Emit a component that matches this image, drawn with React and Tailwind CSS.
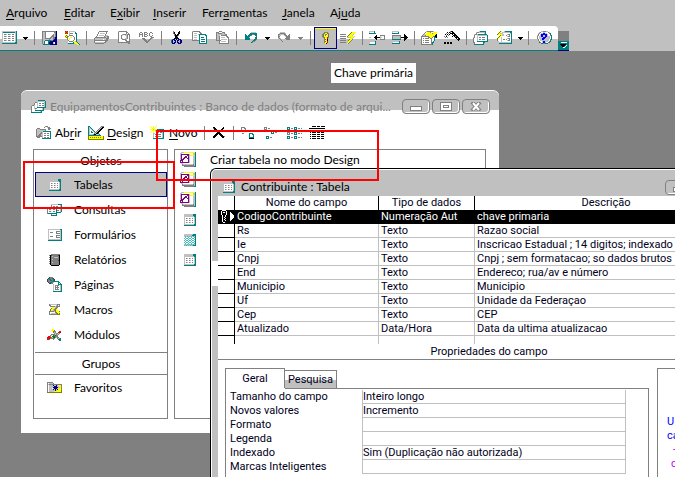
import React from "react";

const COLORS = {
  k: "#000000", g: "#808080", s: "#c0c0c0", w: "#ffffff", t: "#008080", n: "#000080",
  b: "#0000ff", y: "#ffff00", o: "#808000", r: "#ff0000", m: "#800080", e: "#008000", d: "#404040", c: "#40c0c0",
};

const ICONS = {
  table: [
    "sssssssssssssst", "sttttttttttttst", "swwwwwwwwwwwwst", "swggswggswggwst", "swwwwwwwwwwwwst",
    "swggswggswggwst", "swwwwwwwwwwwwst", "swggswggswggwst", "swwwwwwwwwwwwst", "swggswggswggwst",
    "swwwwwwwwwwwwst", "ssssssssssssstt", "ttttttttttttttt",
  ],
  grid: [
    "sssssssssttt", "sssssssssttt", "sssssssssstt", "swwwwwwwwwst", "swgswgswgwst", "swwwwwwwwwst",
    "swgswgswgwst", "swwwwwwwwwst", "swgswgswgwst", "swwwwwwwwwst", "sssssssssstt", "tttttttttttt",
  ],
  gridTeal: [
    "sssssssssttt", "sssssssstttt", "scscscscscst", "wcwwcwwcwwct", "cwccwccwccwt", "wcwwcwwcwwct",
    "cwccwccwccwt", "wcwwcwwcwwct", "cwccwccwccwt", "wcwwcwwcwwct", "scscscscscst", "cscscscscttt",
  ],
  save: [
    "ggggggggggggggn", "gssgwwwwwwwwggn", "gssgwwwwwwwwsgn", "gssgwwwwwwwgsgn", "gssgwwwwwwggsgn", "gssgwwwwwgggsgn", "gssgwwwwggsggnn",
    "gssggggggssggnn", "gssssssgsssgnnn", "gssttttttggnnnn", "gstwwwttnnnnnnn", "gstwwwtnnnnswnn", "gstwwwtnnnnswnn", ".tttttttnnnnnnn",
  ],
  search: [
    "ror.ssssss.....", "oro.swwwwwt....", "ror.sgggwwtt...", "....swwwwwwt...", "yoy.ggggwwwt...", "oyogwwwwgwwt...",
    "yogwwyywwgwt...", "..gwywwwwgwt...", "..gwywwwwgwt...", "..sgwwwwgwwt...", "..swggggyyst...", "..swwwwwtyyyt..",
    "...ttttttsyyyt.", "............yyt",
  ],
  print: [
    ".....ggggggggg.", "....gwwwwwwwg..", "....gwssssswg..", "...gwwwwwwwg...", "...gwssssswgss.", "..gwwwwwwwgssgg",
    ".gggggggggggsgg", "gsssssssssssggg", "gsssssssswssgg.", "gggggggggggggg.", "gwwwwwwwwwwgg..", "gsssssssssgg...", ".ggggggggg.....",
  ],
  preview: [
    "sgggggggg...", "gwwwwwwwgg..", "gwwwwwwwgwg.", "gwwwsgggsggg", "gwwgswwssgwg", "gwwgwwwwsgwg",
    "gwwgwwwwsgwg", "gwwgswwssgwg", "gwwwggggswwg", "gwwwwwwggwwg", "gwwwwwwwgggg", "gggggggggggg", "..........gg",
  ],
  spell: [
    ".gg..ggg...gg...", "g..g.g..g.g..g..", "gggg.ggg..g.....", "g..g.g..g.g..g..", "g..g.ggg...gg...", "............ggg.",
    "...ggg.....ggs..", "....ggg...ggs...", ".....ggg.ggs....", "......ggggs.....", ".......ggs......", "........s.......",
  ],
  cut: [
    "..g.....k..", "..gk...kk..", "..gk...kk..", "...gk.kk...", "...gkkkg...", "....kkg....", "....kkk....",
    "...nknkn...", ".tnn.k.nnn.", "tn.nn.nn.nn", "tn..n.n..nn", "tn.nn.nn.nn", ".nnn...nnn.",
  ],
  copy: [
    "sggggggg.......", "gwwwwwwgg......", "gwssswwwgg.....", "gwwwwwsttttttt.", "gwssswwtwwwwwtt", "gwwwwwwtwwwwwwt",
    "gwssswwtwtttwwt", "gwwwwwwtwwwwwwt", "gwssswwtwttttwt", "gggggggtwwwwwwt", ".......twttttwt", ".......twwwwwwt", ".......tttttttt",
  ],
  paste: [
    "....ggg........", ".gggwwwggg.....", ".gsggggssg.....", ".gssssssssgg...", ".gssswgggggg...", ".gssgwwwwwwgg..",
    ".gssgwsssswwgg.", ".gssgwwwwwwwwg.", ".gssgwsssssswg.", ".gggggwwwwwwwg.", "....gwssssswwg.", "....gwwwwwwwwg.", "....gggggggggg.",
  ],
  undo: [
    "......sssss.", ".....ttttttt", "t...tttggttt", "tt.tttg...tt", "ttttt......t", "tttts.....tt", "ttttt.....tt",
    "ttttt....ttg", "........ttg.", ".......tgg..", "......tg....",
  ],
  redo: [
    "..sssss.....", ".sgggggs....", "ggssssgg...g", "gss...sgg.gg", "gg.....sgggg", "gs......gggg", "sgs....ggggg",
    ".sgs...sgggg", "..sgs......s", "...sgs......", "....ss......",
  ],
  key: [
    "..gggg.", ".goyyog", "goyggyo", "goygwyo", "goyyyyo", ".goyyrg", "..gyyr.", "..goyk.", "..gyyk.", "..goyr.", "..gyyr.", "...yk..",
  ],
  bolt: [
    "...........oyyyy", "..........oyyyy.", "gggggg...oyyys..", "........oyyys...", "gggggg.oyyyyyys.", ".......ssssyys..",
    "gggggg....yys...", ".........oyyg...", "gggggg..oyyg....", "........yyg.....", "gggggg..yg......", ".......yg.......",
  ],
  insertRow: [
    "ssssst..........", "swwwwt..........", "ttttttt.........", "................", ".......k...ggggg", "......kk...swwwg",
    "ss...kkkkkksswwg", "......kk...swwwg", ".......k...ggggg", "................", "sssssst.........", "swwwwwt.........", "swwwwwt.........", "ttttttt.........",
  ],
  deleteRow: [
    "sssssss.........", "swwwwwt.........", "ttttttt.........", "............k...", "ggggggggg...kk..", "gsssssssg...kkk.",
    "gsssssssgkkkkkkk", "gsssssssg...kkk.", "ttttttttt...kk..", "............k...", "ssssssst........", "swwwwwwt........", "tttttttt........",
  ],
  props: [
    ".....sggggggs...", "....gwyyygwwyyyy", "...gwyyyyyygyyyy", "..gsyyyyyyyyyyyk", ".gssgyyyyyyyyykk", "ggggggggyyyygtkk",
    "gwwwwwwggyygwttk", "gwgwggggwggwwt..", "gwwwwwwwwwgwwt..", "gwgwggggwwgwwt..", "gwwwwwwwwwgwt...", "gwgwggggwwgtt...", "gwwwwwwwwwgt....", "gggggggggggt....",
  ],
  wand: [
    "......gkk.......", "...k.kgwkk......", "..g.g.kkkkk.....", ".k.k.k..kwkk....", "..g.g....kkkk...", "g.k.....k.kgkk..",
    ".g.g.......kkkk.", "............kwkk", ".............kkk", "..............k.", "................", "kk.kk.kk........", "kk.kk.kk........",
  ],
  windows: [
    "......stttttt...", "...sggsssssst...", "...gwwwwwwwst...", ".sggsttttttttt..", ".gwwsssssssssst.", ".gwwswwwwwwwwwt.",
    "sgwwswggwgggwwt.", "gwwwswwwwwwwwwt.", "gwwwswggwgggwwt.", "gwwwswwwwwwwwwt.", "gwwwttttttttttt.", "ggwwwwwwwwtt....", ".gwwwwwwwwt.....", ".tttttttttt.....",
  ],
  newObject: [
    "...oy..sttttttt", "..oy.sssssssstt", ".oyssswwwwwwwst", "oyyyysswwwsggwt", "...oysswwgwwgwt", "..oywwwwwwsggwt",
    ".oywswwwwwwwwwt", "oywwswwwwwsggwt", "owwwswggwgwwgwt", "gwwwswwwwwsggwt", "..wwswwwwwwwwwt", "..sssssssssssst", "..ttttttttttttt",
  ],
  help: [
    "....ssgggss....", "..sgwwsswwwgs..", ".sgwssbbsswwgt.", ".gwsbbbbbbswwt.", "sgwsbbssbbswwgt", "gwssbbssbbssswt",
    "gwssssbbbsssswt", "gwsssbbbssssswt", "sgwssbbssssswgt", ".gwssssssssswt.", ".sgwwsbbssswgt.", "..tgwsbbswwgt..", "....ttggttt....",
  ],
  db: [
    "......sttttttt.", "......sssssssst", "...sggswwwwwwst", "...gwwswggwggst", "...gwwswwwwwwst", "sggswwswggwggst",
    "gwwswwswwwwwwst", "gwwswwttttttttt", "gwwsggwwwwwst..", "gwwwswwwwwwst..", "gwwwttttttttt..", "gwwwwwwwwst....", "ttttttttttt....",
  ],
  open: [
    ".........ggg....", "........g..sgg..", ".ggg........ggg.", "gsssgggggg..gg..", "gssssssssg......", "gsssssstttttttt.",
    "gssssgswwwwwwwt.", "gsssggswggwggwt.", "gssggsswwwwwwwt.", "gsgggsswggwggwt.", "ggggggswwwwwwwt.", ".ggg..swggwggwt.", "......ttttttttt.",
  ],
  design: [
    "tt...........ggg", "tst.........gskk", "tsst.......gskk.", "tswst.....gskk..", "tswwst...gskk...", "tswtwst.gskk....",
    "tswttwsgskk.....", "tswwwwgskkt.....", "tssssgkkssst....", "ttttttttttttt...", "oyyyyyyyyyyyyyyo", "oyoyoyoyoyoyoyyo", "oyyyyyyyyyyyyyyo", "oooooooooooooooo",
  ],
  novo: [
    "y..y..y.........", ".y.y.y..........", "..yyy...........", "yyysyyyttttttt..", "..yyysssssssst..", ".y.y.ywwwwwwst..",
    "y..y..yggwggst..", "...sswwwwwwwst..", "...swggwgggwst..", "...swwwwwwwwst..", "...swggwgggwst..", "...swwwwwwwwst..", "...ttttttttttt..",
  ],
  cross: [
    "kk........k.", "gkk......kk.", ".kkk....kk..", "..kkk..kk...", "...kkkkk....", "....kkk.....", "...kkkkk....",
    "..kkk.kkk...", ".kkk...kkk..", "kkk.....kkkg", "kk.......kk.", "............",
  ],
  large: [
    "gggg..........", "g..gg.........", "g...g.........", "g...g.........", "ggggg.........", "..............",
    ".gg.....tttt..", "........t..tt.", "........t...t.", "........t...t.", "........ttttt.", "........kkkkk.",
  ],
  small: [
    "ggg...........", "g.g.gg........", "ggg...........", "..............", ".......ttt....", ".......t.t.gg.",
    ".......ttt....", "..............", "..............", "..ttt.........", "..t.t.gg......", "..ttt.........",
  ],
  list: [
    "ttt....ttt.....", "t.t.gg.t.t.gg.g", "ttt....ttt.....", "...............", "...............", "ggg....ttt.....",
    "g.g.gg.t.t.gg.g", "ggg....ttt.....", "...............", "ttt....ttt.....", "t.t.gg.t.t.gg.g", "ttt....ttt.....",
  ],
  details: [
    "...kkkk.kkk.kkkk", "................", "kkkkkkkkkkkkkkkk", "................", ".k.kkkk.kkk.kkk.", "................",
    ".k.kkkk.kkk.kkk.", "................", ".k.kkkk.kkk.kkk.", "................", ".k.kkkk.kkk.kkk.", "................", ".k.kkkk.kkk.kkk.",
  ],
  wizard: [
    ".sssyyyyyyyyyyyt", "sswwwwwwwwwwwsst", "smmmmmmmmswwwsst", "smwwwwwmmsyyyyst", "smwwwmmwmswwwsst", "smwwmmmwmswwwsst",
    "smwmmwwmmswwwsst", "smmmwwwwmswwwsst", "mmmwwwwwmswwwsst", "mwmwwwwwmswwwsst", "mmmmmmmmmswwwsst", ".sswwwwwwwwwwsst", "..gssssssssssgst", "..ggggggggggggst", "....ggggggggggtt",
  ],
  query: [
    "....ssssssstttt", "....gwwwwwwwwst", "....gwggwggwwst", "ssssttttttwwwst", "gwwwwwwwwtggwst", "gwggwwggwtwwwst",
    "gwwwwwwwwtggwst", "gwggwwggwtwwwst", "gwwwwwwwwttttt.", "gttttttttt.....", "....gwwwwt.....", "....tttttt.....",
  ],
  form: [
    "sssssssssssstt", "swwwwwwwwwwwst", "swwwwwwwggggst", "swgggwwwgwwwst", "swwwwwwwggggst", "swwwwwwwwwwwst",
    "swwwwwwwggggst", "swgggwwwgwwwst", "swwwwwwwggggst", "swwwwwwwwwwwst", "ssssssssssssst", "tttttttttttttt",
  ],
  report: [
    "..ggggggggg", "gkdggggggdk", ".kgsggggggk", "gkgggssssgk", ".kggggggggk", "gkgsggggggk", ".kgggggggdk",
    "gkggggggggk", ".kgsggggggk", "gkggggggggk", ".kggggggggk", "..kkkkkkkk.",
  ],
  page: [
    "..dggg..........", ".dtggtd.........", "dgttggtd........", "dggttgtd........", "dggggttttttt....", ".dgttgswwwwtt...",
    "..ddggwwwwwtwt..", "......swwwwtttt.", "......swggggwst.", "......swgwgwwst.", "......swggggwst.", "......swgwgwwst.", "......swggggwst.", "......swwwwwwst.", "......ttttttttt.",
  ],
  macro: [
    "gsssssssggg", "ggwwwwwsgwg", ".gggggsgggg", "...yyysgg..", "..oyysgo...", ".oyysgoy...", ".oyssgoyy..",
    "gggggsoyyyo", "gwwwwwgoyyy", "gwsssssgoyo", "ggggggggooo",
  ],
  module: [
    ".....yy........", "....yyyo.......", ".....yogg...rr.", "......gsg..rrd.", ".......gsggsg..", "....ggggsgsg...",
    "...gs.egegg....", ".rrg.eeeggg....", "rrrrgseegsgg...", "rrdggggg..gsgt.", "rrg...g....ttt.", "............tt.",
  ],
  favorites: [
    "gggggg.........", "gwssssg........", "gsggggggggggggg", "gwssssnssnsyyyg", "gwsssssnnnssyyg", "gwssssnnnnnssyg",
    "gwssswsnnnsyyyg", "gwssssnsnsnyyyg", "gwssssssnsyyyyo", "gwsssssyyyyyyyo", "ooooooooooooooo",
  ],
};

// Every icon is centred on whole pixels in a box, so its pixels stay sharp.
function Icon({ name, box = 16 }) {
  const rows = ICONS[name];
  const w = Math.max(...rows.map((r) => r.length));
  const dx = Math.floor((box - w) / 2);
  const dy = Math.floor((16 - rows.length) / 2);
  const rects = [];
  rows.forEach((row, y) => {
    let x = 0;
    while (x < row.length) {
      let end = x + 1;
      while (end < row.length && row[end] === row[x]) end++;
      if (row[x] !== ".") rects.push(<rect key={`${x}-${y}`} x={x + dx} y={y + dy} width={end - x} height="1" fill={COLORS[row[x]]} />);
      x = end;
    }
  });
  return (
    <svg width={box} height="16" viewBox={`0 0 ${box} 16`} shapeRendering="crispEdges" aria-hidden="true" className="shrink-0">
      {rects}
    </svg>
  );
}

const Tool = ({ name, label, className = "w-[23px]", box = 17 }) => (
  <button aria-label={label} className={`flex h-6 shrink-0 items-center justify-center ${className}`}>
    <Icon name={name} box={box} />
  </button>
);

const Sep = ({ className = "w-[6px] pl-[2px]" }) => (
  <span className={`flex h-6 shrink-0 items-center ${className}`}>
    <span className="h-[14px] w-px bg-[#808080]" />
  </span>
);

const Caret = ({ label, muted, className = "w-[10px] pl-[2px]" }) => (
  <button aria-label={label} className={`flex h-6 shrink-0 items-center ${className}`}>
    <svg width="5" height="4" viewBox="0 0 5 4" shapeRendering="crispEdges" aria-hidden="true">
      <path d="M0 1h5v1H0zM1 2h3v1H1zM2 3h1v1H2z" fill={muted ? "#808080" : "#000"} />
    </svg>
  </button>
);

const Key = ({ text, at }) => (
  <>{text.slice(0, at)}<span className="underline underline-offset-2">{text[at]}</span>{text.slice(at + 1)}</>
);

function WindowButtons() {
  const base = "flex h-[15px] w-7 items-center justify-center rounded-sm border border-[#808080] bg-[#c0c0c0] shadow-[inset_-1px_-1px_0_#fff]";
  return (
    <div className="flex shrink-0 gap-[2px]">
      <button aria-label="Minimizar" className={base}>
        <span className="mt-1 h-[5px] w-3 border border-[#808080] bg-white" />
      </button>
      <button aria-label="Maximizar" className={base}>
        <span className="flex h-[9px] w-3 items-center justify-center border border-[#808080] bg-white">
          <span className="h-[3px] w-[6px] border border-[#808080]" />
        </span>
      </button>
      <button aria-label="Fechar" className={base}>
        <svg width="12" height="9" viewBox="0 0 12 9" aria-hidden="true">
          <path d="M2 0l8 9M10 0l-8 9" stroke="#808080" strokeWidth="4" />
          <path d="M3 1l6 7M9 1l-6 7" stroke="#fff" strokeWidth="2" />
        </svg>
      </button>
    </div>
  );
}

const MENUS = [["Arquivo", 0, "w-[58px]"], ["Editar", 0, "w-[46px]"], ["Exibir", 1, "w-[43px]"], ["Inserir", 0, "w-[49px]"], ["Ferramentas", 4, "w-[80px]"], ["Janela", 0, "w-[48px]"], ["Ajuda", 2, "w-[48px]"]];
const OBJECTS = [["Tabelas", "grid"], ["Consultas", "query"], ["Formulários", "form"], ["Relatórios", "report"], ["Páginas", "page"], ["Macros", "macro"], ["Módulos", "module"]];
const FIELDS = [
  ["CodigoContribuinte", "Numeração Aut", "chave primaria"],
  ["Rs", "Texto", "Razao social"],
  ["Ie", "Texto", "Inscricao Estadual ; 14 digitos; indexado"],
  ["Cnpj", "Texto", "Cnpj ; sem formatacao; so dados brutos"],
  ["End", "Texto", "Endereco; rua/av e número"],
  ["Municipio", "Texto", "Municipio"],
  ["Uf", "Texto", "Unidade da Federaçao"],
  ["Cep", "Texto", "CEP"],
  ["Atualizado", "Data/Hora", "Data da ultima atualizacao"],
];
const PROPS = [["Tamanho do campo", "Inteiro longo"], ["Novos valores", "Incremento"], ["Formato", ""], ["Legenda", ""], ["Indexado", "Sim (Duplicação não autorizada)"], ["Marcas Inteligentes", ""]];

function Toolbar() {
  return (
    <div className="flex items-end bg-[#c0c0c0]">
      <div className="flex h-[25px] shrink-0 items-start overflow-hidden rounded-tr border-b border-[#008080] bg-[linear-gradient(#fff_13px,#c0c0c0_13px)]">
        <Tool name="table" label="Exibir" className="w-5" box={16} />
        <Caret label="Opções de exibição" className="w-3 pl-[3px]" />
        <Sep />
        <Tool name="save" label="Salvar" />
        <Tool name="search" label="Pesquisar" />
        <Sep />
        <Tool name="print" label="Imprimir" />
        <Tool name="preview" label="Visualizar impressão" />
        <Tool name="spell" label="Verificar ortografia" />
        <Sep />
        <Tool name="cut" label="Recortar" />
        <Tool name="copy" label="Copiar" />
        <Tool name="paste" label="Colar" />
        <Sep />
        <Tool name="undo" label="Desfazer" />
        <Caret label="Lista de desfazer" />
        <Tool name="redo" label="Refazer" />
        <Caret label="Lista de refazer" muted />
        <Sep className="w-2 pl-1" />
        <button aria-label="Chave primária" className="mt-px flex h-[22px] w-[23px] shrink-0 items-center justify-center border border-[#000080] bg-[#c0c0c0] shadow-[inset_0_1px_0_#ff0]">
          <Icon name="key" box={17} />
        </button>
        <Tool name="bolt" label="Índices" />
        <Sep />
        <Tool name="insertRow" label="Inserir linhas" />
        <Tool name="deleteRow" label="Excluir linhas" />
        <Sep />
        <Tool name="props" label="Propriedades" />
        <Tool name="wand" label="Construir" />
        <Sep />
        <Tool name="windows" label="Janela do banco de dados" />
        <Tool name="newObject" label="Novo objeto" />
        <Caret label="Tipos de objeto" />
        <Sep />
        <Tool name="help" label="Ajuda" className="w-[26px]" box={16} />
      </div>
      <button aria-label="Opções da barra de ferramentas" className="flex h-5 w-[11px] flex-col items-center justify-end border-b border-[#000080] bg-[linear-gradient(#808080_10px,#008080_10px)] pb-[2px]">
        <svg width="7" height="6" viewBox="0 0 7 6" shapeRendering="crispEdges" aria-hidden="true">
          <path d="M1 0h6v1H1z" fill="#fff" />
          <path d="M0 2h6v1H0zM1 3h4v1H1zM2 4h2v1H2z" fill="#000" />
          <path d="M6 3h1v1H6zM5 4h1v1H5zM3 5h2v1H3z" fill="#fff" />
        </svg>
      </button>
    </div>
  );
}

function DatabaseWindow() {
  return (
    <section className="absolute left-[21px] top-[90px] flex h-[343px] w-[478px] flex-col overflow-hidden rounded-t-md border-t border-white bg-white">
      <header className="flex h-[30px] shrink-0 items-start gap-[3px] bg-[linear-gradient(#c0c0c0_19px,#fff_19px)] pl-[10px] pr-[9px] pt-2">
        <Icon name="db" />
        <h1 className="min-w-0 flex-1 truncate text-[12px] leading-4 text-[#808080]">EquipamentosContribuintes : Banco de dados (formato de arqui...</h1>
        <WindowButtons />
      </header>
      <div className="flex h-7 shrink-0 items-start pl-[15px]">
        <button className="flex h-6 w-[52px] shrink-0 items-center gap-[3px]"><Icon name="open" /><span><Key text="Abrir" at={2} /></span></button>
        <button className="flex h-6 w-[62px] shrink-0 items-center gap-[3px]"><Icon name="design" /><span><Key text="Design" at={0} /></span></button>
        <button className="flex h-6 w-[52px] shrink-0 items-center gap-[3px]"><Icon name="novo" /><span><Key text="Novo" at={0} /></span></button>
        <Sep />
        <Tool name="cross" label="Excluir" />
        <Sep />
        <Tool name="large" label="Ícones grandes" />
        <Tool name="small" label="Ícones pequenos" />
        <Tool name="list" label="Lista" />
        <Tool name="details" label="Detalhes" />
      </div>
      <div className="flex min-h-0 flex-1 gap-[6px] pb-[14px] pl-3 pr-[13px]">
        <nav className="flex w-[135px] shrink-0 flex-col border border-[#808080] pl-px">
          <h2 className="h-[22px] text-center leading-[22px]">Objetos</h2>
          {OBJECTS.map(([text, icon], i) => (
            <button key={text} className={`flex h-[25px] shrink-0 items-center border text-left ${i === 0 ? "border-[#000080] bg-[#c0c0c0]" : "border-transparent"}`}>
              <span className="flex w-[38px] shrink-0 justify-center"><Icon name={icon} /></span>
              <span>{text}</span>
            </button>
          ))}
          <h2 className="mt-[5px] h-[23px] shrink-0 border-y border-[#808080] text-center leading-[21px]">Grupos</h2>
          <button className="flex h-[26px] shrink-0 items-center border border-transparent text-left">
            <span className="flex w-[38px] shrink-0 justify-center"><Icon name="favorites" /></span>
            <span>Favoritos</span>
          </button>
        </nav>
        <div className="min-w-0 flex-1 border border-[#808080] pl-[5px]">
          <button className="flex h-5 items-center gap-[14px]"><Icon name="wizard" /><span>Criar tabela no modo Design</span></button>
          {["wizard", "wizard", "grid", "gridTeal", "grid"].map((icon, i) => (
            <div key={i} className={`flex h-5 items-center ${i > 1 ? "pl-[2px]" : ""}`}><Icon name={icon} /></div>
          ))}
        </div>
      </div>
    </section>
  );
}

function FieldTable() {
  const head = "border-r border-black p-0 text-center font-normal";
  const cell = "truncate border-b border-r border-[#c0c0c0] py-0 pl-[2px] pr-0";
  return (
    <table className="w-[520px] table-fixed border-separate border-spacing-0">
      <colgroup><col className="w-[17px]" /><col className="w-36" /><col className="w-24" /><col /></colgroup>
      <thead>
        <tr className="h-[14px] leading-[14px]">
          <th className={head} aria-label="Seletor" /><th className={head}>Nome do campo</th><th className={head}>Tipo de dados</th><th className={head}>Descrição</th>
        </tr>
      </thead>
      <tbody>
        {FIELDS.map((row, i) => (
          <tr key={row[0]} className={`h-[14px] leading-[13px] ${i === 0 ? "bg-black text-white" : ""}`}>
            <td className="border-b border-r border-black p-0">
              {i === 0 && (
                <svg className="block" width="16" height="13" viewBox="0 0 16 13" shapeRendering="crispEdges" aria-label="Chave primária">
                  <path d="M4 0h4v1H4zM3 1h1v4H3zM8 1h1v4H8zM4 5h1v7H4zM7 5h1v2H7zM6 7h1v1H6zM7 8h1v1H7zM6 9h1v1H6zM7 10h1v1H7zM5 12h2v1H5zM5 2h2v1H5zM12 2h1v9h-1zM13 3h1v7h-1zM14 4h1v5h-1zM15 5h1v3h-1z" fill="#fff" />
                </svg>
              )}
            </td>
            {row.map((text, c) => <td key={c} className={i === 0 ? "truncate border-b border-r border-black py-0 pl-[2px]" : cell}>{text}</td>)}
          </tr>
        ))}
        <tr className="h-2 leading-[8px]">
          <td className="border-r border-black p-0" /><td className="border-r border-[#c0c0c0] p-0" /><td className="border-r border-[#c0c0c0] p-0" /><td className="p-0" />
        </tr>
      </tbody>
    </table>
  );
}

function DesignWindow() {
  return (
    <section className="absolute -right-[85px] bottom-0 left-[210px] top-[168px] flex flex-col overflow-hidden rounded-tl-md border-l border-t border-black bg-white">
      <header className="ml-px mt-px flex h-[26px] shrink-0 items-center gap-1 rounded-tl bg-[#c0c0c0] pl-[9px] pr-[7px] pt-2">
        <Icon name="grid" />
        <h1 className="flex-1 text-[12px] leading-4">Contribuinte : Tabela</h1>
        <WindowButtons />
      </header>
      <div className="flex min-h-0 flex-1 pl-px">
        <div className="flex w-[6px] shrink-0 flex-col">
          <span className="h-[65px] bg-[#c0c0c0]" />
          <span className="h-[25px]" />
          <span className="flex-1 bg-[#c0c0c0]" />
        </div>
        <div className="flex min-w-0 flex-1 flex-col font-['Roboto',Tahoma,sans-serif] text-[11px] text-[#000020]">
          <FieldTable />
          <p className="h-4 shrink-0 border-b border-[#808080] text-center leading-4">Propriedades do campo</p>
          <div className="flex flex-1 gap-2 pl-[7px] pt-2">
            <div className="w-[424px] shrink-0">
              <div className="flex items-end" role="tablist">
                <button role="tab" aria-selected="true" className="h-5 w-[60px] border-l border-r border-t border-[#808080]">Geral</button>
                <button role="tab" aria-selected="false" className="h-[18px] w-[52px] border-r border-t border-[#808080] bg-[linear-gradient(#fff_9px,#c0c0c0_9px)]">Pesquisa</button>
              </div>
              <div className="flex">
                <span className="w-[60px] border-l border-[#808080]" />
                <span className="h-px flex-1 bg-[#808080]" />
              </div>
              <div className="h-24 border-l border-r border-[#808080] pl-1 pr-[22px] pt-px">
                {PROPS.map(([label, value]) => (
                  <div key={label} className="flex h-[14px]">
                    <label htmlFor={label} className="w-[132px] shrink-0 leading-[14px]">{label}</label>
                    <input id={label} defaultValue={value} className="h-[14px] min-w-0 flex-1 border-b border-l border-r border-[#c0c0c0] bg-transparent p-0 outline-none" />
                  </div>
                ))}
              </div>
            </div>
            <aside className="flex-1 border-l border-t border-[#808080] pl-[9px] pt-[46px] leading-[14px] text-[#0000ff]">
              <p>U</p>
              <p>ca</p>
              <p className="pl-[6px] text-[#c000ff]">-</p>
              <p className="pl-1 text-[#c000ff]">c</p>
            </aside>
          </div>
        </div>
      </div>
    </section>
  );
}

export default function App() {
  return (
    <main className="relative h-screen overflow-hidden bg-[#808080] font-['Lato','Segoe_UI',sans-serif] text-[12px] leading-4 text-black">
      <nav className="flex h-[26px] items-center bg-[#c0c0c0] pl-[6px]">
        {MENUS.map(([text, at, width]) => (
          <button key={text} className={`shrink-0 text-left ${width}`}><Key text={text} at={at} /></button>
        ))}
      </nav>
      <Toolbar />
      <div role="tooltip" className="absolute left-[331px] top-[63px] h-5 bg-white px-[3px] leading-5">Chave primária</div>
      <DatabaseWindow />
      <DesignWindow />
      <div className="pointer-events-none absolute left-[156px] top-[130px] h-[51px] w-[223px] border-2 border-[#ff0000]" />
      <div className="pointer-events-none absolute left-[23px] top-[161px] h-12 w-[152px] border-2 border-[#ff0000]" />
    </main>
  );
}
